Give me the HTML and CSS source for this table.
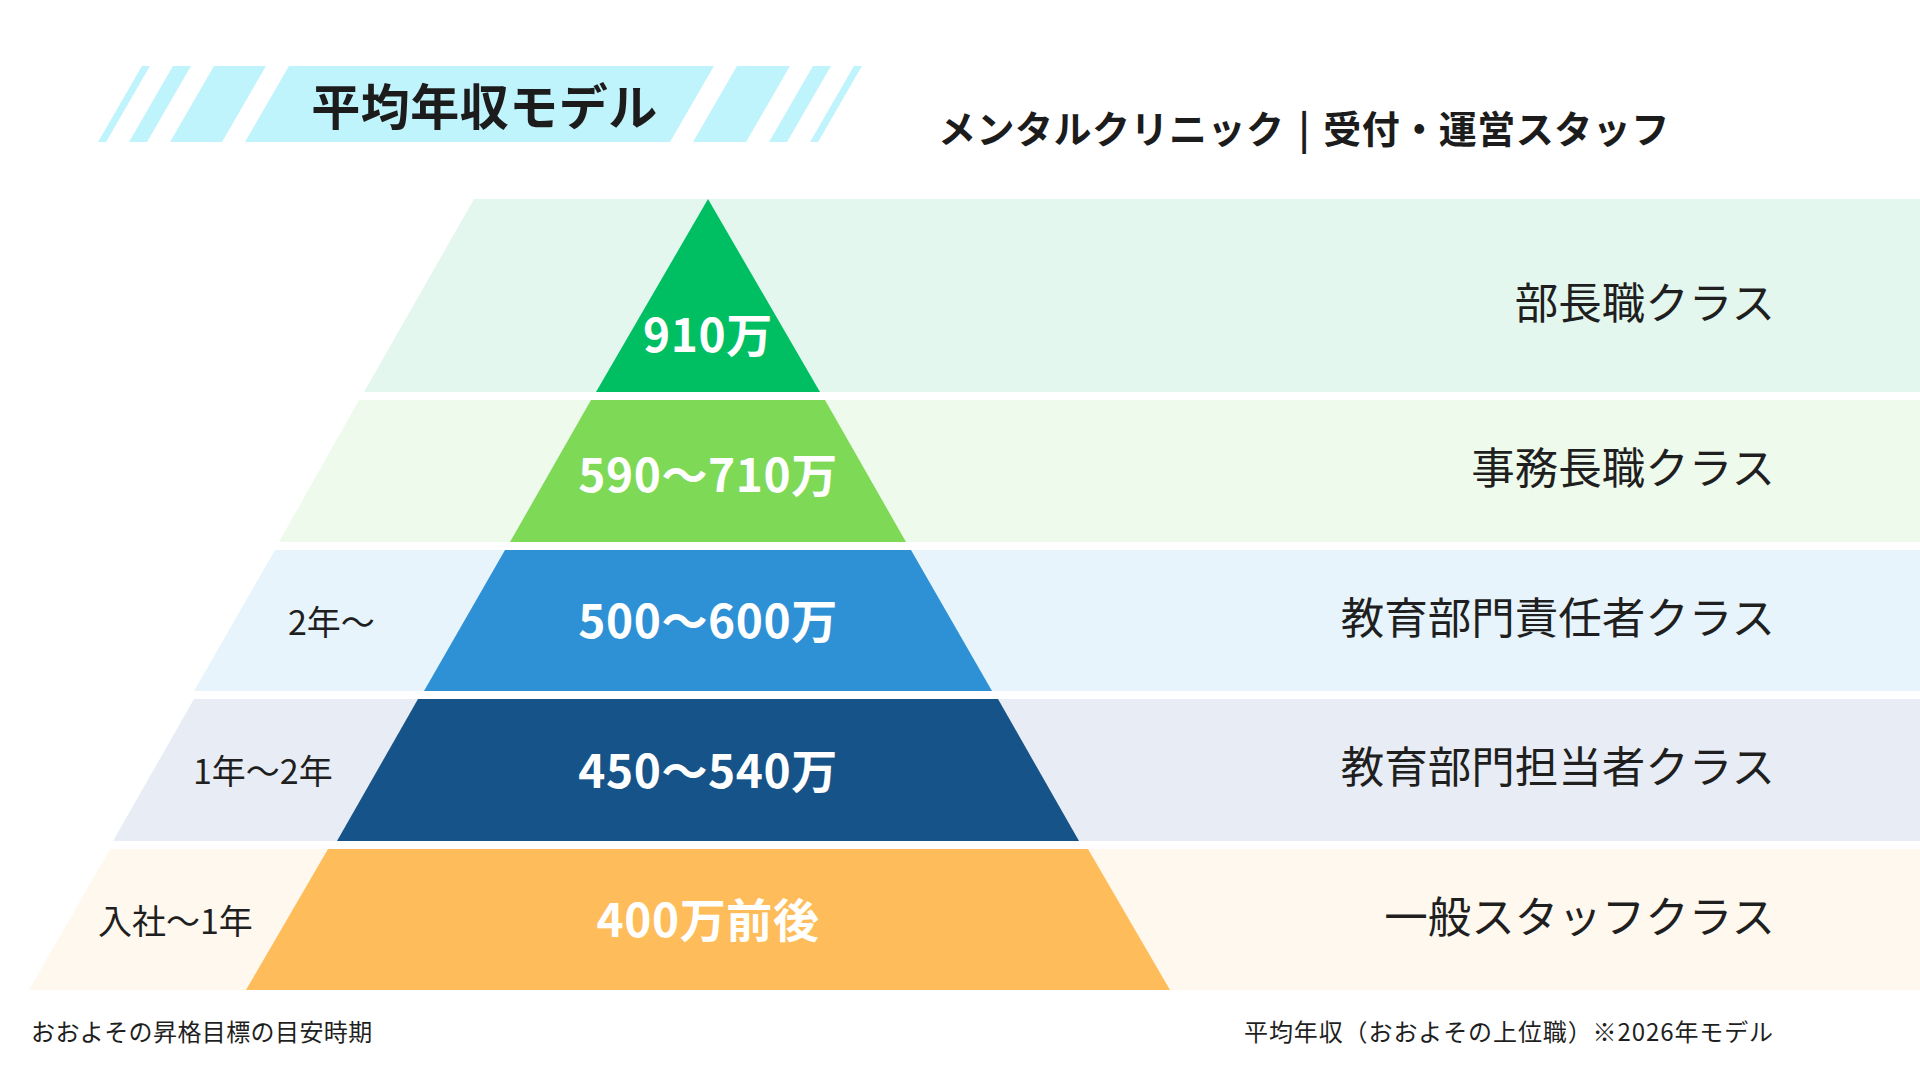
FILE: index.html
```html
<!DOCTYPE html>
<html lang="ja">
<head>
<meta charset="utf-8">
<title>平均年収モデル</title>
<link rel="stylesheet" href="styles.css">
</head>
<body>
<div class="page">
  <header class="header">
    <div class="banner">
      <span class="stripe s1"></span>
      <span class="stripe s2"></span>
      <span class="stripe s3"></span>
      <span class="stripe main"><span class="title">平均年収モデル</span></span>
      <span class="stripe s5"></span>
      <span class="stripe s6"></span>
      <span class="stripe s7"></span>
    </div>
    <div class="subtitle">メンタルクリニック<span class="bar">|</span>受付・運営スタッフ</div>
  </header>

  <section class="pyramid">
    <div class="row r1">
      <div class="left"></div>
      <div class="trap"><span class="value">910万</span></div>
      <div class="right"><span class="role">部長職クラス</span></div>
    </div>
    <div class="row r2">
      <div class="left"></div>
      <div class="trap"><span class="value">590～710万</span></div>
      <div class="right"><span class="role">事務長職クラス</span></div>
    </div>
    <div class="row r3">
      <div class="left"><span class="years">2年～</span></div>
      <div class="trap"><span class="value">500～600万</span></div>
      <div class="right"><span class="role">教育部門責任者クラス</span></div>
    </div>
    <div class="row r4">
      <div class="left"><span class="years">1年～2年</span></div>
      <div class="trap"><span class="value">450～540万</span></div>
      <div class="right"><span class="role">教育部門担当者クラス</span></div>
    </div>
    <div class="row r5">
      <div class="left"><span class="years">入社～1年</span></div>
      <div class="trap"><span class="value">400万前後</span></div>
      <div class="right"><span class="role">一般スタッフクラス</span></div>
    </div>
  </section>

  <footer class="footer">
    <span class="note">おおよその昇格目標の目安時期</span>
    <span class="note wide">平均年収（おおよその上位職）※2026年モデル</span>
  </footer>
</div>
</body>
</html>
```

FILE: styles.css
```css
* { box-sizing: border-box; }

html, body {
  margin: 0;
  padding: 0;
  background: #ffffff;
}

body {
  font-family: "Noto Sans CJK JP", "Noto Sans", sans-serif;
  color: #1f1f1f;
}

.page {
  width: 1920px;
  height: 1080px;
  overflow: hidden;
  display: flex;
  flex-direction: column;
}

/* ---------- header ---------- */
.header {
  height: 199px;
  padding-top: 66px;
  display: flex;
  align-items: flex-start;
}

.banner {
  display: flex;
  gap: 23px;
  margin-left: 120px;
  height: 76px;
}

.stripe {
  display: block;
  height: 76px;
  background: #c0f4fd;
  transform: skewX(-30deg);
}

.s1, .s7 { width: 8px; }
.s2, .s6 { width: 18px; }
.s3 { width: 52px; }
.s5 { width: 53px; }

.main {
  width: 425px;
  display: flex;
  align-items: center;
  justify-content: center;
}

.title {
  display: block;
  transform: skewX(30deg);
  font-size: 49px;
  font-weight: 700;
  line-height: 1;
  color: #1c1c1c;
  letter-spacing: 0.5px;
  padding-left: 10px;
  margin-top: -2px;
}

.subtitle {
  margin-left: 98px;
  margin-top: 42px;
  font-size: 38px;
  font-weight: 700;
  line-height: 1;
  color: #1c1c1c;
  white-space: nowrap;
  letter-spacing: 0.5px;
}

.bar {
  display: inline-block;
  margin: 0 13px 0 14px;
}

/* ---------- pyramid ---------- */
.pyramid {
  display: flex;
  flex-direction: column;
  gap: 8px;
}

.row {
  display: flex;
  width: 1920px;
}

.left {
  flex-shrink: 0;
  display: flex;
  align-items: center;
  white-space: nowrap;
}

.years {
  font-size: 34px;
  line-height: 1;
  color: #1f1f1f;
}

.trap {
  flex-shrink: 0;
  display: flex;
  align-items: center;
  justify-content: center;
  padding-bottom: 5px;
}

.value {
  font-size: 46px;
  font-weight: 700;
  line-height: 1;
  color: #ffffff;
  letter-spacing: 0.6px;
  white-space: nowrap;
}

.right {
  flex: 1;
  display: flex;
  align-items: center;
  justify-content: flex-end;
  padding-right: 145px;
  padding-bottom: 10px;
}

.role {
  font-size: 43.5px;
  line-height: 1;
  color: #1f1f1f;
  white-space: nowrap;
}

/* row geometry */
.r1 {
  height: 193px;
  background: #e3f7ef;
  clip-path: polygon(474px 0, 100% 0, 100% 100%, 364px 100%);
}
.r1 .left { width: 596px; }
.r1 .trap {
  width: 224px;
  background: #00bf63;
  clip-path: polygon(112px 0, 112px 0, 100% 100%, 0 100%);
  padding-top: 72px;
  padding-bottom: 0;
}
.r1 .right { padding-bottom: 0; padding-top: 10px; }

.r2 {
  height: 142px;
  background: #eefaec;
  clip-path: polygon(359px 0, 100% 0, 100% 100%, 279px 100%);
}
.r2 .left { width: 510px; }
.r2 .trap {
  width: 396px;
  background: #7ed957;
  clip-path: polygon(81px 0, calc(100% - 81px) 0, 100% 100%, 0 100%);
  padding-top: 2px;
  padding-bottom: 0;
}

.r3 {
  height: 141px;
  background: #e8f4fb;
  clip-path: polygon(275px 0, 100% 0, 100% 100%, 194px 100%);
}
.r3 .left { width: 424px; padding-left: 288px; }
.r3 .trap {
  width: 568px;
  background: #2e91d6;
  clip-path: polygon(81px 0, calc(100% - 81px) 0, 100% 100%, 0 100%);
}

.r4 {
  height: 142px;
  background: #e8edf5;
  clip-path: polygon(194px 0, 100% 0, 100% 100%, 113px 100%);
}
.r4 .left { width: 337px; padding-left: 193px; }
.r4 .trap {
  width: 742px;
  background: #155389;
  clip-path: polygon(81px 0, calc(100% - 81px) 0, 100% 100%, 0 100%);
}

.r5 {
  height: 141px;
  background: #fef8ee;
  clip-path: polygon(110px 0, 100% 0, 100% 100%, 29px 100%);
}
.r5 .left { width: 246px; padding-left: 98px; }
.r5 .trap {
  width: 924px;
  background: #febd5a;
  clip-path: polygon(82px 0, calc(100% - 82px) 0, 100% 100%, 0 100%);
}

/* ---------- footer ---------- */
.footer {
  display: flex;
  justify-content: space-between;
  padding: 0 146px 0 31px;
  margin-top: 27px;
}

.note {
  font-size: 24px;
  line-height: 1.2;
  color: #1f1f1f;
  letter-spacing: 0.4px;
}

.note.wide {
  letter-spacing: 0.9px;
}
```
